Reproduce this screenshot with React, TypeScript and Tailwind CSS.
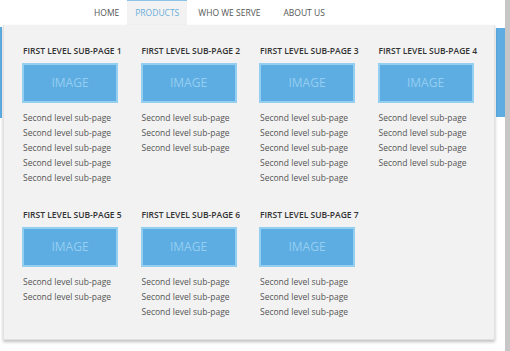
import React from 'react';

const navItems = ['HOME', 'PRODUCTS', 'WHO WE SERVE', 'ABOUT US'];

const subPages = [
  { title: 'FIRST LEVEL SUB-PAGE 1', links: 5 },
  { title: 'FIRST LEVEL SUB-PAGE 2', links: 3 },
  { title: 'FIRST LEVEL SUB-PAGE 3', links: 5 },
  { title: 'FIRST LEVEL SUB-PAGE 4', links: 4 },
  { title: 'FIRST LEVEL SUB-PAGE 5', links: 2 },
  { title: 'FIRST LEVEL SUB-PAGE 6', links: 3 },
  { title: 'FIRST LEVEL SUB-PAGE 7', links: 3 },
];

const SubPageColumn: React.FC<{ title: string; links: number }> = ({ title, links }) => (
  <div className="flex flex-col">
    <h3 className="text-[8.5px] leading-[12px] font-semibold text-[#333]">{title}</h3>
    <div className="mt-[6px] ml-[-1px] w-[96px] h-[40px] bg-[#5dade2] border-2 border-[#94cff2] flex items-center justify-center">
      <span className="text-[12px] text-[#95cdf1]">IMAGE</span>
    </div>
    <ul className="mt-[7px] flex flex-col">
      {Array.from({ length: links }).map((_, i) => (
        <li key={i} className="text-[8.5px] leading-[15px] text-[#555]">
          Second level sub-page
        </li>
      ))}
    </ul>
  </div>
);

export default function App() {
  return (
    <div className="relative w-[510px] h-[351px] bg-white overflow-hidden flex font-['Open_Sans',sans-serif]">
      <div className="flex-1 flex flex-col">
        {/* Top navigation */}
        <nav className="h-[25px] flex items-stretch pl-[86px]">
          {navItems.map((item) => (
            <a
              key={item}
              className={`flex items-center px-[8px] text-[8.5px] ${
                item === 'PRODUCTS'
                  ? 'bg-[#f2f2f2] border-t border-[#8cc4e8] text-[#6aaedb]'
                  : 'text-[#555] border-t border-transparent'
              } ${item === 'WHO WE SERVE' ? 'pl-[11px]' : ''} ${item === 'ABOUT US' ? 'ml-[7px]' : ''}`}
            >
              {item}
            </a>
          ))}
        </nav>

        {/* Page content behind the dropdown */}
        <div className="flex justify-between pt-[2px]">
          <div className="w-[2px] h-[91px] bg-[#5dade2]" />
          <div className="w-[9px] h-[89px] mt-[1px] bg-[#5dade2]" />
        </div>
      </div>
      <div className="w-[5px] bg-[#c6c6c6]" />

      {/* Mega menu dropdown */}
      <div className="absolute left-[3px] top-[25px] w-[492px] h-[315px] bg-[#f2f2f2] border-l border-r border-b border-[#e2e2e2] shadow-[0_2px_3px_rgba(0,0,0,0.25)] pl-[19px] pt-[20px]">
        <div className="grid grid-cols-4 w-[474px] gap-y-[24px]">
          {subPages.map((p) => (
            <SubPageColumn key={p.title} title={p.title} links={p.links} />
          ))}
        </div>
      </div>
    </div>
  );
}
